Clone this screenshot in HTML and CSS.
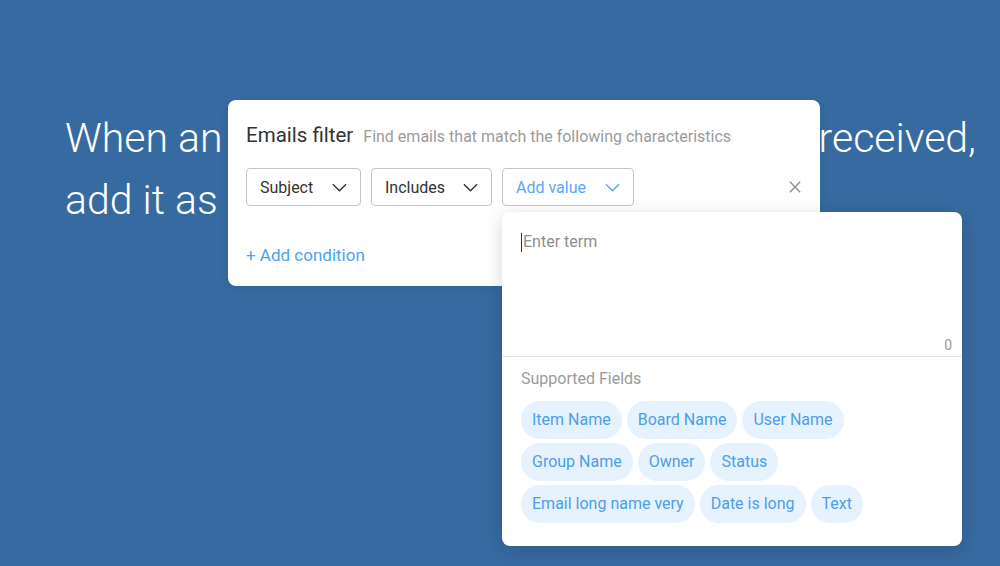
FILE: index.html
```html
<!DOCTYPE html>
<html>
<head>
	<meta charset="UTF-8">
	<title>Emails filter</title>
	<link rel="stylesheet" href="styles.css">
</head>
<body>

	<!-- recipe sentence behind the filter -->
	<div class="recipe">
		<p class="recipe-line">
			<span>When an email</span>
			<span>is received,</span>
		</p>
		<p>add it as an item on this board</p>
	</div>

	<!-- filter card -->
	<div class="filter">
		<div class="filter-head">
			<h3>Emails filter</h3>
			<span class="hint">Find emails that match the following characteristics</span>
		</div>

		<div class="condition">
			<div class="select select-subject">
				<span>Subject</span>
				<svg class="chevron" viewBox="0 0 16 9"><path d="M1 1l7 7 7-7"/></svg>
			</div>
			<div class="select select-op">
				<span>Includes</span>
				<svg class="chevron" viewBox="0 0 16 9"><path d="M1 1l7 7 7-7"/></svg>
			</div>
			<div class="value-wrap">
				<div class="select select-value">
					<span>Add value</span>
					<svg class="chevron" viewBox="0 0 16 9"><path d="M1 1l7 7 7-7"/></svg>
				</div>

				<!-- value popover -->
				<div class="popover">
					<div class="term">
						<p class="placeholder"><span class="caret"></span>Enter term</p>
						<span class="count">0</span>
					</div>
					<div class="fields">
						<p class="fields-label">Supported Fields</p>
						<div class="chips">
							<span class="chip">Item Name</span>
							<span class="chip">Board Name</span>
							<span class="chip">User Name</span>
							<span class="chip">Group Name</span>
							<span class="chip">Owner</span>
							<span class="chip">Status</span>
							<span class="chip">Email long name very</span>
							<span class="chip">Date is long</span>
							<span class="chip">Text</span>
						</div>
					</div>
				</div>
			</div>
			<svg class="remove" viewBox="0 0 14 14"><path d="M1 1l12 12M13 1L1 13"/></svg>
		</div>

		<a class="add-condition" href="#">+ Add condition</a>
	</div>

</body>
</html>
```

FILE: styles.css
```css
* { margin: 0; padding: 0; box-sizing: border-box; }

html, body {
	width: 100%;
	height: 100%;
	overflow: hidden;
	background: #376aa1;
	font-family: Roboto, "Liberation Sans", sans-serif;
}

.recipe {
	width: 976px;
	padding: 107px 0 0 65px;
	font-size: 41px;
	font-weight: 300;
	line-height: 62px;
	color: #fff;
	white-space: nowrap;
}
.recipe-line {
	display: flex;
	justify-content: space-between;
}

.filter {
	position: absolute;
	left: 228px;
	top: 100px;
	width: 592px;
	height: 186px;
	padding: 23px 18px 19px 18px;
	background: #fff;
	border-radius: 8px;
	box-shadow: 0 2px 10px rgba(0, 0, 0, .08);
}

.filter-head {
	display: flex;
	align-items: baseline;
	line-height: 24px;
}
.filter-head h3 {
	font-size: 20.5px;
	font-weight: 400;
	color: #333;
}
.filter-head .hint {
	margin-left: 10px;
	font-size: 16px;
	color: #9b9b9b;
}

.condition {
	display: flex;
	align-items: center;
	gap: 10px;
	margin-top: 19px;
}

.select {
	display: flex;
	align-items: center;
	justify-content: space-between;
	height: 38px;
	padding: 0 13px;
	border: 1px solid #c4c4c4;
	border-radius: 4px;
	font-size: 16px;
	color: #333;
}
.select-subject { width: 115px; }
.select-op { width: 121px; }
.select-value { width: 132px; color: #5aa8f4; }

.chevron {
	width: 15px;
	height: 9px;
	fill: none;
	stroke: #333;
	stroke-width: 1.5;
}
.select-value .chevron { stroke: #5aa8f4; }

.value-wrap {
	position: relative;
}

.remove {
	width: 12px;
	height: 12px;
	margin-left: auto;
	margin-right: 1px;
	fill: none;
	stroke: #8d8d8d;
	stroke-width: 1.6;
}

.add-condition {
	display: inline-block;
	margin-top: 37px;
	font-size: 17px;
	line-height: 24px;
	color: #4ca2f2;
	text-decoration: none;
}

.popover {
	position: absolute;
	top: 44px;
	left: 0;
	width: 460px;
	height: 334px;
	background: #fff;
	border-radius: 8px;
	box-shadow: 0 4px 18px rgba(0, 0, 0, .16);
	z-index: 2;
}

.term {
	display: flex;
	flex-direction: column;
	justify-content: space-between;
	height: 145px;
	padding: 20px 10px 3px 19px;
	border-bottom: 1px solid #e4e4e4;
}
.placeholder {
	display: flex;
	align-items: center;
	font-size: 16px;
	line-height: 20px;
	color: #8e8e8e;
}
.caret {
	width: 1px;
	height: 19px;
	margin-right: 1px;
	background: #333;
}
.count {
	align-self: flex-end;
	font-size: 14px;
	line-height: 16px;
	color: #999;
}

.fields {
	padding: 12px 19px 0 19px;
}
.fields-label {
	margin-bottom: 12px;
	font-size: 16px;
	line-height: 20px;
	color: #9b9b9b;
}

.chips {
	display: flex;
	flex-wrap: wrap;
	gap: 4px 5px;
	width: 350px;
}
.chip {
	height: 38px;
	padding: 0 11px;
	border-radius: 19px;
	background: #e6f2fd;
	font-size: 16px;
	line-height: 38px;
	color: #4c9fee;
}
```
